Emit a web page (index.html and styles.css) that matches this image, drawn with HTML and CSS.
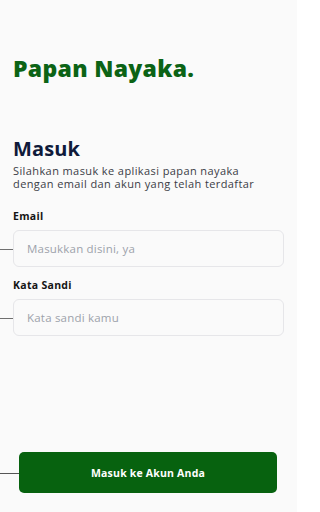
FILE: index.html
```html
<!DOCTYPE html>
<html lang="id">
<head>
<meta charset="utf-8">
<title>Papan Nayaka - Masuk</title>
<link rel="stylesheet" href="styles.css">
</head>
<body>
<main class="screen">
  <h1 class="brand">Papan Nayaka.</h1>
  <section class="intro">
    <h2 class="heading">Masuk</h2>
    <p class="lead">Silahkan masuk ke aplikasi papan nayaka dengan email dan akun yang telah terdaftar</p>
  </section>
  <form class="form">
    <label class="field">
      <span class="field-label">Email</span>
      <span class="input-wrap"><input class="input" type="email" placeholder="Masukkan disini, ya"></span>
    </label>
    <label class="field">
      <span class="field-label">Kata Sandi</span>
      <span class="input-wrap"><input class="input" type="password" placeholder="Kata sandi kamu"></span>
    </label>
  </form>
  <div class="actions">
    <button class="submit" type="button">Masuk ke Akun Anda</button>
  </div>
</main>
</body>
</html>
```
FILE: styles.css
```css
* { box-sizing: border-box; }
html, body { margin: 0; padding: 0; background: #ffffff; }
body { font-family: "Open Sans", "Liberation Sans", sans-serif; }

.screen {
  width: 297px;
  height: 512px;
  background: #fafafa;
  padding: 0 13px;
  display: flex;
  flex-direction: column;
}

.brand {
  margin: 53px 0 0;
  font-size: 23px;
  line-height: 30px;
  font-weight: 800;
  color: #0b6315;
  letter-spacing: 0.3px;
}

.intro { margin-top: 52px; }

.heading {
  margin: 0;
  font-size: 20px;
  line-height: 28px;
  font-weight: 700;
  color: #0f1a3a;
  letter-spacing: 0.1px;
}

.lead {
  margin: 1px 0 0;
  width: 262px;
  font-size: 11px;
  line-height: 13px;
  letter-spacing: 0.4px;
  color: #3a3d46;
}

.form {
  margin-top: 20px;
  display: flex;
  flex-direction: column;
  gap: 12px;
}

.field { display: flex; flex-direction: column; gap: 7px; }

.field-label {
  font-size: 10.5px;
  line-height: 13px;
  font-weight: 700;
  color: #141414;
  letter-spacing: 0.3px;
}

.input-wrap { position: relative; display: block; }
.input-wrap::before {
  content: "";
  position: absolute;
  left: -13px;
  top: 50%;
  width: 13px;
  height: 1px;
  background: #6f6f6f;
}

.input {
  display: block;
  width: 271px;
  height: 37px;
  border: 1px solid #e6e6e9;
  border-radius: 6px;
  background: #fafafa;
  padding: 0 13px;
  font-family: inherit;
  font-size: 11.5px;
  letter-spacing: 0.2px;
  color: #222;
  outline: none;
}
.input::placeholder { color: #9da2ab; }

.actions {
  margin-top: auto;
  margin-bottom: 19px;
  padding-left: 6px;
  position: relative;
}
.actions::before {
  content: "";
  position: absolute;
  left: -13px;
  top: 50%;
  width: 19px;
  height: 1px;
  background: #555;
}

.submit {
  display: block;
  width: 258px;
  height: 41px;
  border: 0;
  border-radius: 5px;
  background: #07620f;
  color: #ffffff;
  font-family: inherit;
  font-size: 10.5px;
  font-weight: 700;
  letter-spacing: 0.2px;
}
```
